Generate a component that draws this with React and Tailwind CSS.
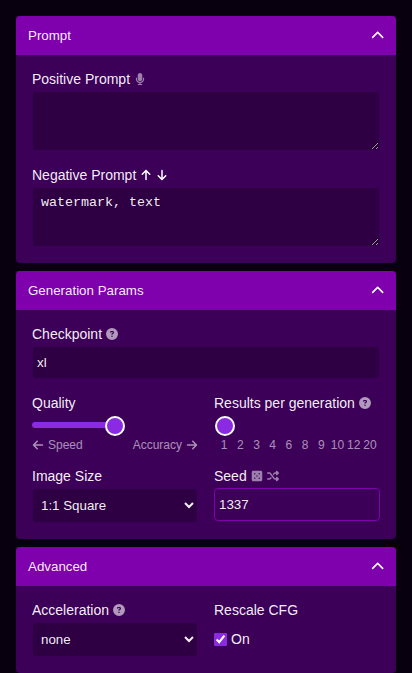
import React from "react";
import {
  FaArrowDown,
  FaArrowLeft,
  FaArrowRight,
  FaArrowUp,
  FaChevronUp,
  FaCircleQuestion,
  FaDiceFive,
  FaMicrophone,
  FaShuffle,
} from "react-icons/fa6";

function Panel({ title, children }) {
  return (
    <section className="shrink-0 overflow-hidden rounded bg-[#3d0059]">
      <header className="flex h-[39px] items-center justify-between bg-[#7f00ad] pr-3 pl-3 text-[13.333px]">
        <span>{title}</span>
        <FaChevronUp className="size-[13.333px] text-white" />
      </header>
      <div className="flex flex-col gap-4 p-4">{children}</div>
    </section>
  );
}

function Field({ label, icons, children }) {
  return (
    <div className="flex min-w-0 flex-1 flex-col">
      <div className="flex h-5 shrink-0 items-start text-[14px] leading-4">
        <span className="whitespace-nowrap">{label}</span>
        {icons && <span className="ml-1 flex h-4 items-center gap-1 text-white">{icons}</span>}
      </div>
      {children}
    </div>
  );
}

const box = "block w-full rounded border border-[#3d0059] bg-[#2e0043] outline-none";

function Help() {
  return <FaCircleQuestion className="size-3 opacity-60" />;
}

function Select({ value }) {
  return (
    <select className={box + " h-[35px] px-1 text-[13.333px]"} defaultValue={value}>
      <option>{value}</option>
    </select>
  );
}

function Slider({ filled }) {
  return (
    <div className="flex h-[22px] shrink-0 items-start pt-[7px]">
      <div className={filled ? "relative h-1.5 w-[83px] rounded-full bg-[#8a2be2]" : "relative h-1.5 w-[11px]"}>
        <div className="absolute -top-[6px] -right-[10px] size-5 rounded-full border-2 border-white bg-[#8a2be2]" />
      </div>
    </div>
  );
}

export default function App() {
  return (
    <main className="flex h-[673px] flex-col gap-2 overflow-hidden bg-[#09000f] p-4 font-['Liberation_Sans',Arial,sans-serif] text-white/95 scheme-dark">
      <Panel title="Prompt">
        <Field label="Positive Prompt" icons={<FaMicrophone className="size-3 opacity-50" />}>
          <textarea className={box + " h-[60px] resize px-2 py-[7px] font-['Liberation_Mono',monospace] text-[13.333px] leading-4"} />
        </Field>
        <Field
          label="Negative Prompt"
          icons={
            <>
              <FaArrowUp className="size-3" />
              <FaArrowDown className="size-3" />
            </>
          }
        >
          <textarea
            className={box + " h-[60px] resize px-2 py-[7px] font-['Liberation_Mono',monospace] text-[13.333px] leading-4"}
            defaultValue="watermark, text"
          />
        </Field>
      </Panel>

      <Panel title="Generation Params">
        <Field label="Checkpoint" icons={<Help />}>
          <input className={box + " h-[33px] px-1 text-[13.333px]"} defaultValue="xl" />
        </Field>
        <div className="flex h-[57px] gap-4">
          <Field label="Quality">
            <Slider filled />
            <div className="flex shrink-0 items-center justify-between text-xs leading-4 opacity-60">
              <span className="flex items-center gap-1">
                <FaArrowLeft className="size-3" />
                Speed
              </span>
              <span className="flex items-center gap-1">
                Accuracy
                <FaArrowRight className="size-3" />
              </span>
            </div>
          </Field>
          <Field label="Results per generation" icons={<Help />}>
            <Slider />
            <div className="mx-0.5 grid shrink-0 grid-cols-10 text-center text-xs leading-4 opacity-60">
              {[1, 2, 3, 4, 6, 8, 9, 10, 12, 20].map((n) => (
                <span key={n}>{n}</span>
              ))}
            </div>
          </Field>
        </div>
        <div className="flex gap-4">
          <Field label="Image Size">
            <Select value="1:1 Square" />
          </Field>
          <Field
            label="Seed"
            icons={
              <>
                <FaDiceFive className="size-3 opacity-50" />
                <FaShuffle className="size-3 opacity-50" />
              </>
            }
          >
            <input
              className="block h-[33px] w-full rounded border border-[#7f00ad] bg-transparent px-1 text-[13.333px] outline-none"
              defaultValue="1337"
            />
          </Field>
        </div>
      </Panel>

      <Panel title="Advanced">
        <div className="flex gap-4">
          <Field label="Acceleration" icons={<Help />}>
            <Select value="none" />
          </Field>
          <Field label="Rescale CFG">
            <label className="mt-[9px] flex h-4 items-center text-[14px] leading-4">
              <input type="checkbox" defaultChecked className="mr-1 size-[13px] accent-[#8a2be2] scheme-light" />
              On
            </label>
          </Field>
        </div>
      </Panel>
    </main>
  );
}
